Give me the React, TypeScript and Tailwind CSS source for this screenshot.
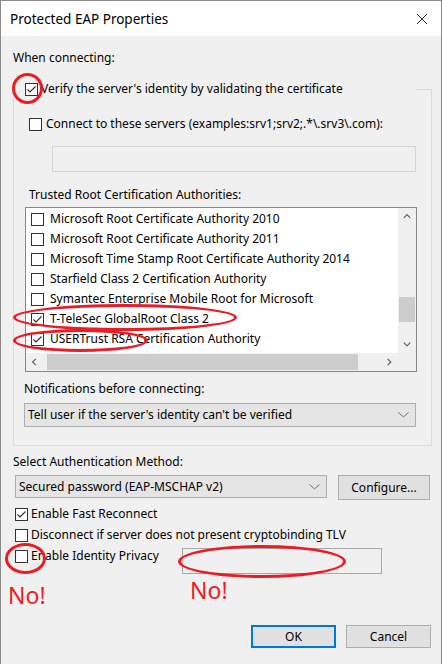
import React from "react"

const font = { fontFamily: '"Noto Sans", "Open Sans", sans-serif' }

function CheckBox({ checked }: { checked?: boolean }) {
  return (
    <div className="w-[13px] h-[13px] shrink-0 border border-[#333333] bg-white relative">
      {checked && (
        <svg width="11" height="11" viewBox="0 0 11 11" className="absolute left-0 top-0">
          <polyline points="1.5,5.5 4,8 9.5,2.5" fill="none" stroke="#333333" strokeWidth="1.2" />
        </svg>
      )}
    </div>
  )
}

function Chevron({ dir, color = "#606060", w = 8 }: { dir: "up" | "down" | "left" | "right"; color?: string; w?: number }) {
  const pts =
    dir === "up"
      ? "1,6 5,2 9,6"
      : dir === "down"
      ? "1,2 5,6 9,2"
      : dir === "left"
      ? "6,1 2,5 6,9"
      : "2,1 6,5 2,9"
  return (
    <svg width={w} height={w} viewBox="0 0 10 10">
      <polyline points={pts} fill="none" stroke={color} strokeWidth="1.5" />
    </svg>
  )
}

function ComboChevron() {
  return (
    <svg width="11" height="6" viewBox="0 0 11 6">
      <polyline points="0.5,0.5 5.5,5 10.5,0.5" fill="none" stroke="#707070" strokeWidth="1" />
    </svg>
  )
}

const certs: [string, boolean][] = [
  ["Microsoft Root Certificate Authority 2010", false],
  ["Microsoft Root Certificate Authority 2011", false],
  ["Microsoft Time Stamp Root Certificate Authority 2014", false],
  ["Starfield Class 2 Certification Authority", false],
  ["Symantec Enterprise Mobile Root for Microsoft", false],
  ["T-TeleSec GlobalRoot Class 2", true],
  ["USERTrust RSA Certification Authority", true],
]

export default function App() {
  return (
    <div className="w-[443px] h-[664px] bg-white relative overflow-hidden text-[12px] text-black" style={font}>
      <div className="w-[442px] h-[664px] border-l border-r border-t border-[#8a8a8a] flex flex-col">
        {/* title bar */}
        <div className="h-[35px] bg-white flex items-center justify-between pl-[9px] pr-[13px] shrink-0">
          <span className="text-[13.5px] leading-[20px] pt-[1px]">Protected EAP Properties</span>
          <svg width="12" height="12" viewBox="0 0 12 12">
            <path d="M1 1 L11 11 M11 1 L1 11" stroke="#333333" strokeWidth="1" />
          </svg>
        </div>

        {/* body */}
        <div className="flex-1 bg-[#f0f0f0] pl-[12px] flex flex-col leading-[16px]">
          <div className="mt-[14px] h-[16px]">When connecting:</div>

          {/* group box */}
          <div className="mt-[23px] w-[419px] h-[357px] border border-[#dcdcdc] flex flex-col">
            <div className="-mt-[8px] -ml-[1px] w-[403px] bg-[#f0f0f0] pl-[12px] h-[14px] flex items-center gap-[3px]">
              <CheckBox checked />
              <span>Verify the server's identity by validating the certificate</span>
            </div>

            <div className="mt-[21px] ml-[15px] h-[14px] flex items-center gap-[4px]">
              <CheckBox />
              <span>Connect to these servers (examples:srv1;srv2;.*\.srv3\.com):</span>
            </div>

            <div className="mt-[15px] ml-[38px] w-[364px] h-[26px] border border-[#d5d5d5] bg-[#f0f0f0]" />

            <div className="mt-[15px] ml-[15px]">Trusted Root Certification Authorities:</div>

            {/* list */}
            <div className="mt-[4px] ml-[11px] w-[392px] h-[165px] border border-[#828790] bg-white flex flex-col">
              <div className="flex flex-1 min-h-0">
                <div className="flex-1 pt-[1px] overflow-hidden">
                  {certs.map(([name, checked]) => (
                    <div key={name} className="h-[20px] flex items-center pl-[5px] gap-[6px] whitespace-nowrap">
                      <CheckBox checked={checked} />
                      <span>{name}</span>
                    </div>
                  ))}
                </div>
                <div className="w-[18px] bg-[#f0f0f0] flex flex-col">
                  <div className="h-[17px] flex items-center justify-center">
                    <Chevron dir="up" />
                  </div>
                  <div className="flex-1 flex flex-col">
                    <div className="mt-[72px] mx-[1px] h-[25px] bg-[#cdcdcd]" />
                  </div>
                  <div className="h-[17px] flex items-center justify-center">
                    <Chevron dir="down" />
                  </div>
                </div>
              </div>
              <div className="h-[18px] flex bg-[#f0f0f0]">
                <div className="w-[17px] flex items-center justify-center">
                  <Chevron dir="left" />
                </div>
                <div className="flex-1 flex items-stretch py-[1px]">
                  <div className="ml-[4px] w-[311px] bg-[#cdcdcd]" />
                </div>
                <div className="w-[17px] flex items-center justify-center">
                  <Chevron dir="right" />
                </div>
                <div className="w-[18px]" />
              </div>
            </div>

            <div className="mt-[9px] ml-[10px]">Notifications before connecting:</div>

            <div className="mt-[6px] ml-[10px] w-[392px] h-[24px] border border-[#adadad] bg-[#e5e5e5] flex items-center justify-between pl-[3px] pr-[6px]">
              <span>Tell user if the server's identity can't be verified</span>
              <ComboChevron />
            </div>
          </div>

          <div className="mt-[8px]">Select Authentication Method:</div>

          <div className="mt-[5px] flex items-start">
            <div className="ml-[2px] w-[312px] h-[23px] border border-[#adadad] bg-[#e5e5e5] flex items-center justify-between pl-[3px] pr-[6px]">
              <span>Secured password (EAP-MSCHAP v2)</span>
              <ComboChevron />
            </div>
            <div className="ml-[11px] w-[92px] h-[25px] border border-[#adadad] bg-[#e1e1e1] flex items-center justify-center">
              Configure...
            </div>
          </div>

          <div className="mt-[7px] ml-[2px] h-[14px] flex items-center gap-[3px]">
            <CheckBox checked />
            <span>Enable Fast Reconnect</span>
          </div>
          <div className="mt-[7px] ml-[2px] h-[14px] flex items-center gap-[3px]">
            <CheckBox />
            <span>Disconnect if server does not present cryptobinding TLV</span>
          </div>
          <div className="mt-[6px] flex items-start">
            <div className="mt-[1px] ml-[2px] w-[167px] h-[14px] flex items-center gap-[3px]">
              <CheckBox />
              <span>Enable Identity Privacy</span>
            </div>
            <div className="w-[200px] h-[26px] border border-[#a8a8a8] bg-[#f0f0f0]" />
          </div>

          <div className="mt-[51px] w-[419px] flex justify-end gap-[10px] pr-[1px]">
            <div className="w-[85px] h-[23px] border-2 border-[#0078d7] bg-[#e1e1e1] flex items-center justify-center">
              OK
            </div>
            <div className="w-[85px] h-[23px] border border-[#adadad] bg-[#e1e1e1] flex items-center justify-center">
              Cancel
            </div>
          </div>
        </div>
      </div>

      {/* red annotations */}
      <div className="absolute left-[12px] top-[73px] w-[31px] h-[31px] rounded-full border-[3px] border-[#ec1c24]" />
      <div className="absolute left-[13px] top-[304px] w-[224px] h-[27px] rounded-[50%] border-[3px] border-[#ec1c24]" />
      <div className="absolute left-[13px] top-[329px] w-[135px] h-[23px] rounded-[50%] border-[3px] border-[#ec1c24]" />
      <div className="absolute left-[5px] top-[543px] w-[41px] h-[31px] rounded-[50%] border-[3px] border-[#ec1c24]" />
      <div className="absolute left-[178px] top-[545px] w-[168px] h-[33px] rounded-[50%] border-[3px] border-[#ec1c24]" />
      <div className="absolute left-[8px] top-[580px] text-[23px] leading-[30px] text-[#ec1c24]">No!</div>
      <div className="absolute left-[190px] top-[575px] text-[23px] leading-[30px] text-[#ec1c24]">No!</div>
    </div>
  )
}
